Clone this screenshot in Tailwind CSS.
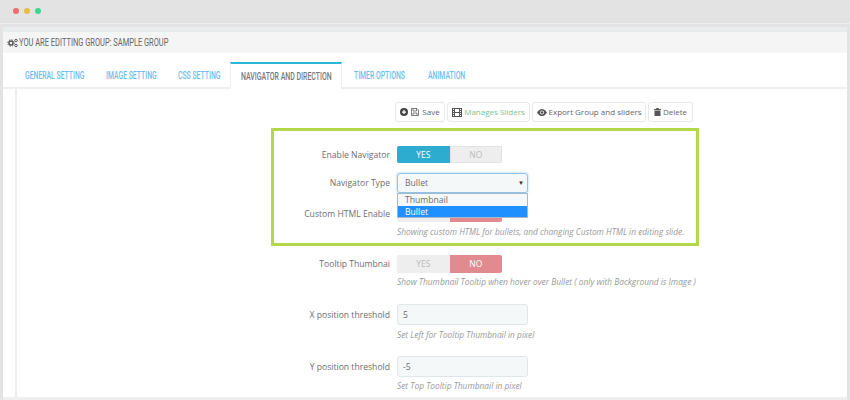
<!DOCTYPE html>
<html lang="en">
<head>
<meta charset="UTF-8">
<title>Navigator and Direction</title>
<script src="https://cdn.jsdelivr.net/npm/@tailwindcss/browser@4"></script>
</head>
<body class="w-[850px] h-[400px] overflow-hidden bg-[#e3e3e3] font-['Open_Sans',sans-serif] text-[#6e6e6e]">
  <!-- window bar -->
  <div class="h-[24px] flex items-start gap-[5px] pl-[13px] pt-[8px] border-b border-[#ececec]">
    <span class="w-[6px] h-[6px] rounded-full bg-[#ee6b6e]"></span>
    <span class="w-[6px] h-[6px] rounded-full bg-[#e8bd45]"></span>
    <span class="w-[6px] h-[6px] rounded-full bg-[#3dd68c]"></span>
  </div>

  <div class="relative h-[373px] mt-[3px] mx-[3px] bg-white border-t-[5px] border-[#e9ecec]">
    <!-- panel heading -->
    <div class="h-[21px] bg-[#f5f5f5] flex items-center pl-[4px] gap-[1px] text-[#666] font-['Roboto',sans-serif] text-[11px]">
      <svg class="w-[11px] h-[10px]" viewBox="0 0 22 20" fill="none" stroke="#555">
        <circle cx="8" cy="10" r="4" stroke-width="3"/>
        <circle cx="8" cy="10" r="6.5" stroke-width="2" stroke-dasharray="2.5 2.6"/>
        <circle cx="18" cy="5" r="2.5" stroke-width="2"/>
        <circle cx="18" cy="15" r="2.5" stroke-width="2"/>
      </svg>
      <span class="whitespace-nowrap origin-left scale-x-[.68] pt-[1px]">YOU ARE EDITTING GROUP: SAMPLE GROUP</span>
    </div>

    <!-- tabs -->
    <div class="flex h-[36px] pt-[9px] pl-[22px] border-b-[2px] border-[#eeeeee] font-['Roboto',sans-serif] text-[10px] leading-[12px] font-medium whitespace-nowrap">
      <div class="w-[81px] pt-[8px] text-[#6dbdee]"><span class="block origin-left scale-x-[.685]">GENERAL SETTING</span></div>
      <div class="w-[72px] pt-[8px] text-[#6dbdee]"><span class="block origin-left scale-x-[.685]">IMAGE SETTING</span></div>
      <div class="w-[52px] pt-[8px] text-[#6dbdee]"><span class="block origin-left scale-x-[.685]">CSS SETTING</span></div>
      <div class="w-[112px] h-[27px] bg-white border-t-[2px] border-x border-t-[#29b6d8] border-x-[#eeeeee] pl-[10px] pt-[7px] text-[#777]"><span class="block origin-left scale-x-[.695]">NAVIGATOR AND DIRECTION</span></div>
      <div class="w-[86px] pl-[12px] pt-[8px] text-[#6dbdee]"><span class="block origin-left scale-x-[.685]">TIMER OPTIONS</span></div>
      <div class="pt-[8px] text-[#6dbdee]"><span class="block origin-left scale-x-[.685]">ANIMATION</span></div>
    </div>

    <!-- tab content -->
    <div class="ml-[12px] h-[311px] border-l-[2px] border-[#eeeeee] text-[8.6px]">
      <div class="flex gap-[2px] pt-[13px] pl-[378px] h-[33px] whitespace-nowrap text-[8px]">
        <button class="h-[20px] w-[50px] border border-[#e8e8e8] rounded-[3px] flex items-center justify-center gap-[3px] text-[#666]">
          <svg class="w-[8px] h-[8px]" viewBox="0 0 16 16"><circle cx="8" cy="8" r="8" fill="#444"/><path d="M8 4v8M4 8h8" stroke="#fff" stroke-width="2.5"/></svg>
          <svg class="w-[8px] h-[8px]" viewBox="0 0 16 16" fill="none" stroke="#555" stroke-width="1.5"><path d="M1 1h11l3 3v11H1z"/><path d="M4 1v5h7V1M4 15v-5h8v5"/></svg>
          <span>Save</span>
        </button>
        <button class="h-[20px] w-[83px] border border-[#e8e8e8] rounded-[3px] flex items-center justify-center gap-[2px] text-[#7cc48c]">
          <svg class="w-[10px] h-[9px]" viewBox="0 0 20 18" fill="none" stroke="#555" stroke-width="2"><rect x="1" y="1" width="18" height="16"/><path d="M5 1v16M15 1v16M5 9h10M1 5h4M1 9h4M1 13h4M15 5h4M15 9h4M15 13h4"/></svg>
          <span>Manages Sliders</span>
        </button>
        <button class="h-[20px] w-[114px] border border-[#e8e8e8] rounded-[3px] flex items-center justify-center gap-[2px] text-[#666]">
          <svg class="w-[10px] h-[7px]" viewBox="0 0 20 14"><path d="M0 7C4 1 7 0 10 0s6 1 10 7c-4 6-7 7-10 7S4 13 0 7z" fill="#555"/><circle cx="10" cy="7" r="4" fill="#fff"/><circle cx="10" cy="7" r="2.5" fill="#555"/></svg>
          <span>Export Group and sliders</span>
        </button>
        <button class="h-[20px] w-[45px] border border-[#e8e8e8] rounded-[3px] flex items-center justify-center gap-[2px] text-[#666]">
          <svg class="w-[7px] h-[8px]" viewBox="0 0 14 16"><path d="M5 0h4l1 2h4v2H0V2h4zM1 5h12v11H1z" fill="#555"/></svg>
          <span>Delete</span>
        </button>
      </div>

      <div class="w-[760px] pt-[24px]">
        <!-- Enable Navigator -->
        <div class="flex items-center h-[17px] gap-[7px]">
          <label class="w-[373px] text-right pt-[1px]">Enable Navigator</label>
          <div class="flex w-[105px] h-[17px] rounded-[2px] overflow-hidden text-center leading-[17px] font-medium text-[8.5px]">
            <span class="w-1/2 bg-[#2eaccf] text-white">YES</span>
            <span class="w-1/2 bg-[#eeeeee] text-[#bbb] border border-[#e2e2e2] leading-[15px]">NO</span>
          </div>
        </div>

        <!-- Navigator Type -->
        <div class="relative flex items-center h-[20px] gap-[7px] mt-[10px]">
          <label class="w-[373px] text-right pt-[1px]">Navigator Type</label>
          <div class="w-[131px] h-[20px] bg-[#f5f8f9] border border-[#8fc4ea] rounded-[3px] shadow-[0_0_3px_#a8d4f2] flex items-center justify-between pl-[7px] pr-[3px] pt-[1px]">
            <span>Bullet</span>
            <span class="text-[6px] text-[#333]">▼</span>
          </div>
          <!-- open select list -->
          <div class="absolute left-[380px] top-[20px] z-10 w-[131px] h-[25px] bg-[#f5f8f9] border border-[#a9b8c8] leading-[12px]">
            <div class="h-[12px] pl-[7px]">Thumbnail</div>
            <div class="h-[11px] pl-[7px] bg-[#1e90ff] text-white">Bullet</div>
          </div>
        </div>

        <!-- Custom HTML -->
        <div class="flex items-center h-[18px] gap-[7px] mt-[11px]">
          <label class="w-[373px] text-right pt-[2px]">Custom HTML Enable</label>
          <div class="flex w-[105px] h-[18px] rounded-[2px] overflow-hidden text-center leading-[18px] font-medium text-[8.5px]">
            <span class="w-1/2 bg-[#eeeeee] text-[#bbb]">YES</span>
            <span class="w-1/2 bg-[#e18b90] text-white">NO</span>
          </div>
        </div>
        <p class="ml-[380px] mt-[3px] h-[13px] pt-[1px] italic text-[#999] text-[8.36px] whitespace-nowrap">Showing custom HTML for bullets, and changing Custom HTML in editing slide.</p>

        <!-- Tooltip Thumbnail -->
        <div class="flex items-center h-[18px] gap-[7px] mt-[17px]">
          <label class="w-[373px] text-right pt-[1px]">Tooltip Thumbnai</label>
          <div class="flex w-[105px] h-[18px] rounded-[2px] overflow-hidden text-center leading-[18px] font-medium text-[8.5px]">
            <span class="w-1/2 bg-[#eeeeee] text-[#bbb]">YES</span>
            <span class="w-1/2 bg-[#e18b90] text-white">NO</span>
          </div>
        </div>
        <p class="ml-[380px] mt-[3px] h-[13px] italic text-[#999] text-[8.36px] whitespace-nowrap">Show Thumbnail Tooltip when hover over Bullet ( only with Background is Image )</p>

        <!-- X threshold -->
        <div class="flex items-center h-[21px] gap-[7px] mt-[15px]">
          <label class="w-[373px] text-right pt-[1px]">X position threshold</label>
          <div class="w-[131px] h-[21px] bg-[#f5f8f9] border border-[#dfe7ea] rounded-[3px] flex items-center pl-[5px] pt-[1px]">5</div>
        </div>
        <p class="ml-[380px] mt-[3px] h-[13px] pt-[1px] italic text-[#999] text-[8.36px] whitespace-nowrap">Set Left for Tooltip Thumbnail in pixel</p>

        <!-- Y threshold -->
        <div class="flex items-center h-[21px] gap-[7px] mt-[15px]">
          <label class="w-[373px] text-right pt-[1px]">Y position threshold</label>
          <div class="w-[131px] h-[21px] bg-[#f5f8f9] border border-[#dfe7ea] rounded-[3px] flex items-center pl-[5px] pt-[1px]">-5</div>
        </div>
        <p class="ml-[380px] mt-[2px] h-[13px] pt-[1px] italic text-[#999] text-[8.36px] whitespace-nowrap">Set Top Tooltip Thumbnail in pixel</p>
      </div>
    </div>

    <!-- green highlight -->
    <div class="absolute left-[268px] top-[96px] w-[428px] h-[118px] border-[3px] border-[#b5d84b] pointer-events-none"></div>
    <div class="absolute left-0 right-0 bottom-0 h-[3px] bg-[#eeeeee]"></div>
  </div>
</body>
</html>
